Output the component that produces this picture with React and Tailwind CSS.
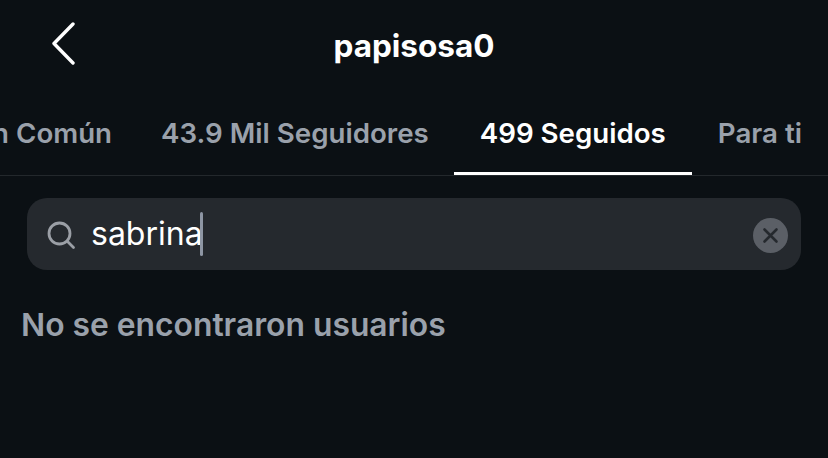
import React from 'react';

const tabs = [
    { label: 'En Común', padding: 'pl-[26px] pr-[23px]' },
    { label: '43.9 Mil Seguidores', padding: 'pl-[26px] pr-[25px]' },
    { label: '499 Seguidos', padding: 'px-[26px]', active: true },
    { label: 'Para ti', padding: 'px-[26px]' },
];

const App = () => {
    return (
        <div className="w-[828px] h-[458px] overflow-hidden bg-[#0b1014] font-['Inter',sans-serif]">
            {/* Header */}
            <div className="relative flex h-[90px] items-center justify-center">
                <button className="absolute left-[50px] top-[21px] text-white">
                    <svg className="w-[26px] h-[44px]" viewBox="0 0 26 44" fill="none" stroke="currentColor" strokeWidth="3.4" strokeLinecap="round" strokeLinejoin="round">
                        <path d="M23 3 L4 22.5 L23 42" />
                    </svg>
                </button>
                <span className="mt-[2px] text-[31.5px] leading-none font-bold text-white">papisosa0</span>
            </div>

            {/* Tabs */}
            <div className="flex h-[86px] justify-end overflow-hidden border-b border-[#23282c]">
                {tabs.map((tab) => (
                    <div
                        key={tab.label}
                        className={`shrink-0 pt-[26px] text-[27.7px] leading-[34px] font-semibold whitespace-nowrap border-b-[3px] ${tab.padding} ${tab.active ? 'text-white border-white' : 'text-[#9aa1ab] border-transparent'}`}
                    >
                        {tab.label}
                    </div>
                ))}
            </div>

            {/* Search */}
            <div className="px-[27px] pt-[22px]">
                <div className="flex h-[72px] items-center rounded-[20px] bg-[#25292e] pl-[19px] pr-[13px]">
                    <svg className="mt-[2px] w-[30px] h-[30px] shrink-0 text-[#9b9fa6]" viewBox="0 0 30 30" fill="none" stroke="currentColor" strokeWidth="2.8" strokeLinecap="round">
                        <circle cx="13.5" cy="13.5" r="10.5" />
                        <path d="M21.5 21.5 L27.5 27.5" />
                    </svg>
                    <span className="ml-[15px] text-[32px] leading-none font-normal text-white">sabrina</span>
                    <span className="-ml-[3px] h-[44px] w-[3px] rounded-full bg-[#8d95a3]" />
                    <span className="ml-auto mt-[2px] flex h-[35px] w-[35px] items-center justify-center rounded-full bg-[#5b5f66]">
                        <svg className="w-[17px] h-[17px] text-[#25292e]" viewBox="0 0 17 17" fill="none" stroke="currentColor" strokeWidth="2.6" strokeLinecap="round">
                            <path d="M2.5 2.5 L14.5 14.5 M14.5 2.5 L2.5 14.5" />
                        </svg>
                    </span>
                </div>
            </div>

            {/* Empty result */}
            <p className="pl-[21px] pt-[36px] text-[31.8px] leading-[38px] font-semibold text-[#9aa1ab]">No se encontraron usuarios</p>
        </div>
    );
};

export default App;
